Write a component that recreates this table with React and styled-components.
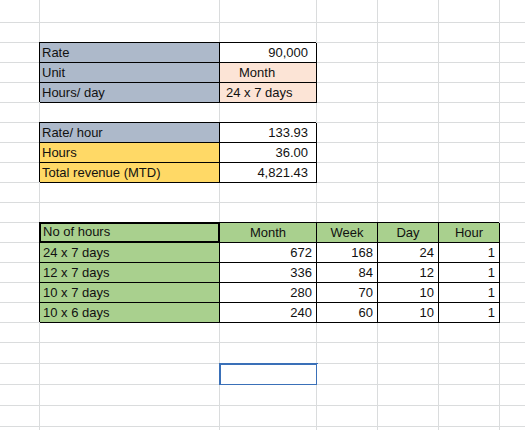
import React from "react";
import styled, { createGlobalStyle, css } from "styled-components";

const GRID = "#dadcdd";
const INK = "#111";

const Global = createGlobalStyle`
  html, body { margin: 0; padding: 0; background: #fff; }
  body { font-family: "Liberation Sans", Arial, sans-serif; }
`;

const Sheet = styled.div`
  display: grid;
  grid-template-columns: 40px 180px 97px 61px 61px 61px 40px;
  grid-template-rows: 23px repeat(16, 20px) repeat(4, 21px) 30px;
  width: 525px;
  height: 430px;
  overflow: hidden;
  background: #fff;
`;

const boxThin = css`
  border-right-color: #000;
  border-bottom-color: #000;
  box-shadow: -1px -1px 0 0 #000;
`;

const boxThick = css`
  border-right: 2px solid #000;
  border-bottom: 2px solid #000;
  box-shadow: -1px -1px 0 0 #000, inset 1px 1px 0 0 #000;
`;

const Cell = styled.div`
  box-sizing: border-box;
  display: flex;
  align-items: flex-end;
  justify-content: ${(p) =>
    p.$align === "right" ? "flex-end" : p.$align === "center" ? "center" : "flex-start"};
  padding: ${(p) => p.$pt || 0}px ${(p) => p.$pr ?? 2}px 0 ${(p) => p.$pl ?? 2}px;
  border-right: 1px solid ${GRID};
  border-bottom: 1px solid ${GRID};
  background: ${(p) => p.$bg || "#fff"};
  color: ${INK};
  font-size: 13px;
  line-height: 19px;
  white-space: nowrap;
  ${(p) => p.$box === "thin" && boxThin}
  ${(p) => p.$box === "thick" && boxThick}
  ${(p) =>
    p.$sel &&
    css`
      outline: 2px solid #3a70b8;
      outline-offset: -1px;
    `}
`;

const BLUE = "#adb9ca";
const PEACH = "#fce4d6";
const YELLOW = "#ffd966";
const GREEN = "#a9d08e";

const label = (text, bg, extra = {}) => ({ text, bg, box: "thin", ...extra });
const num = (text, bg, extra = {}) => ({ text, bg, box: "thin", align: "right", ...extra });

const rows = {
  2: { 1: label("Rate", BLUE), 2: num("90,000", null, { pr: 8 }) },
  3: { 1: label("Unit", BLUE), 2: label("Month", PEACH, { pl: 19 }) },
  4: { 1: label("Hours/ day", BLUE), 2: label("24 x 7 days", PEACH, { pl: 6 }) },
  6: { 1: label("Rate/ hour", BLUE), 2: num("133.93", null, { pr: 8 }) },
  7: { 1: label("Hours", YELLOW), 2: num("36.00", null, { pr: 8 }) },
  8: { 1: label("Total revenue (MTD)", YELLOW), 2: num("4,821.43", null, { pr: 8 }) },
  11: {
    1: { text: "No of hours", bg: GREEN, box: "thick", pl: 3 },
    2: { text: "Month", bg: GREEN, box: "thin", align: "center", pt: 2 },
    3: { text: "Week", bg: GREEN, box: "thin", align: "center", pt: 2 },
    4: { text: "Day", bg: GREEN, box: "thin", align: "center", pt: 2 },
    5: { text: "Hour", bg: GREEN, box: "thin", align: "center", pt: 2 },
  },
  18: { 2: { sel: true } },
};

const dataRows = [
  ["24 x 7 days", "672", "168", "24", "1"],
  ["12 x 7 days", "336", "84", "12", "1"],
  ["10 x 7 days", "280", "70", "10", "1"],
  ["10 x 6 days", "240", "60", "10", "1"],
];

dataRows.forEach((r, i) => {
  const row = { 1: label(r[0], GREEN, { pl: 3 }) };
  r.slice(1).forEach((v, j) => {
    row[j + 2] = num(v, null, { pr: 4 });
  });
  rows[12 + i] = row;
});

const ROW_COUNT = 22;
const COL_COUNT = 7;

export default function App() {
  const cells = [];
  for (let r = 0; r < ROW_COUNT; r++) {
    for (let c = 0; c < COL_COUNT; c++) {
      const d = (rows[r] && rows[r][c]) || {};
      cells.push(
        <Cell
          key={`${r}-${c}`}
          $bg={d.bg}
          $align={d.align}
          $box={d.box}
          $pl={d.pl}
          $pr={d.pr}
          $pt={d.pt}
          $sel={d.sel}
        >
          {d.text || ""}
        </Cell>
      );
    }
  }
  return (
    <>
      <Global />
      <Sheet>{cells}</Sheet>
    </>
  );
}
